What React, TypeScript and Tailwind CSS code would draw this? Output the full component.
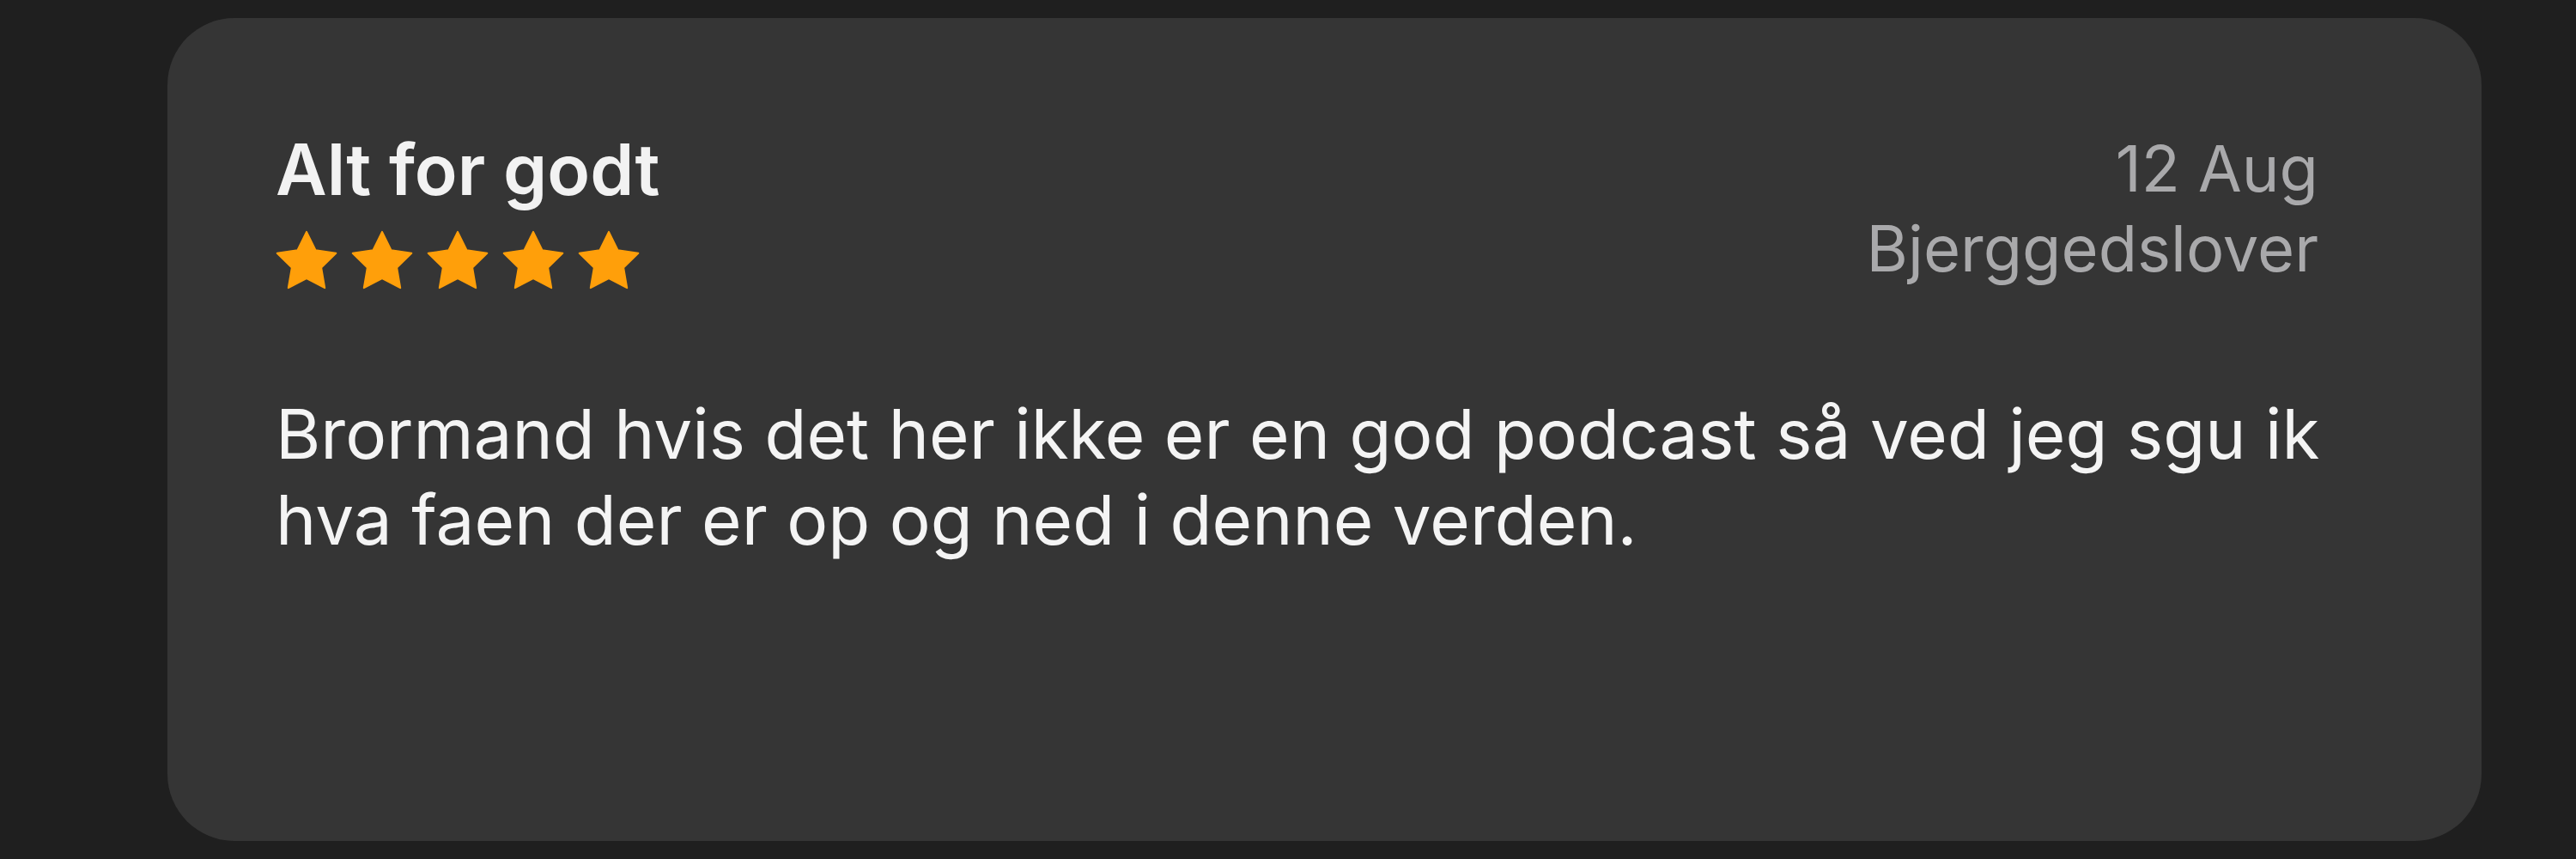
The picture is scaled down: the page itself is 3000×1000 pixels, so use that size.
const stars = [0, 1, 2, 3, 4];

function Star() {
  return (
    <svg width="72" height="69" viewBox="1.5 1.5 21 20" className="shrink-0">
      <polygon
        points="12,2 15.09,8.26 22,9.27 17,14.14 18.18,21.02 12,17.77 5.82,21.02 7,14.14 2,9.27 8.91,8.26"
        fill="#ff9f0a"
        stroke="#ff9f0a"
        strokeWidth="0.6"
        strokeLinejoin="round"
      />
    </svg>
  );
}

export default function App() {
  return (
    <div className="min-h-[1000px] w-[3000px] bg-[#1f1f1f] pt-[21px] pl-[195px] font-['Inter','Liberation_Sans',sans-serif]">
      <div className="h-[958px] w-[2695px] rounded-[78px] bg-[#353535] pl-[126px] pr-[190px] pt-[129px]">
        {/* Header: title + rating, date + author */}
        <div className="flex items-start justify-between">
          <div>
            <h2 className="text-[82px] leading-[96px] font-semibold text-[#f2f2f2]">Alt for godt</h2>
            <div className="mt-[22px] flex gap-[16px]">
              {stars.map((i) => (
                <Star key={i} />
              ))}
            </div>
          </div>
          <div className="text-right text-[74px] leading-[93px] text-[#a9a9ab]">
            <div>12 Aug</div>
            <div>Bjerggedslover</div>
          </div>
        </div>

        {/* Review body */}
        <p className="mt-[118px] text-[80px] leading-[100px] text-[#f4f4f4]">
          <span className="whitespace-nowrap">Brormand hvis det her ikke er en god podcast så ved jeg sgu ik</span>
          <br />
          <span className="whitespace-nowrap">hva faen der er op og ned i denne verden.</span>
        </p>
      </div>
    </div>
  );
}
